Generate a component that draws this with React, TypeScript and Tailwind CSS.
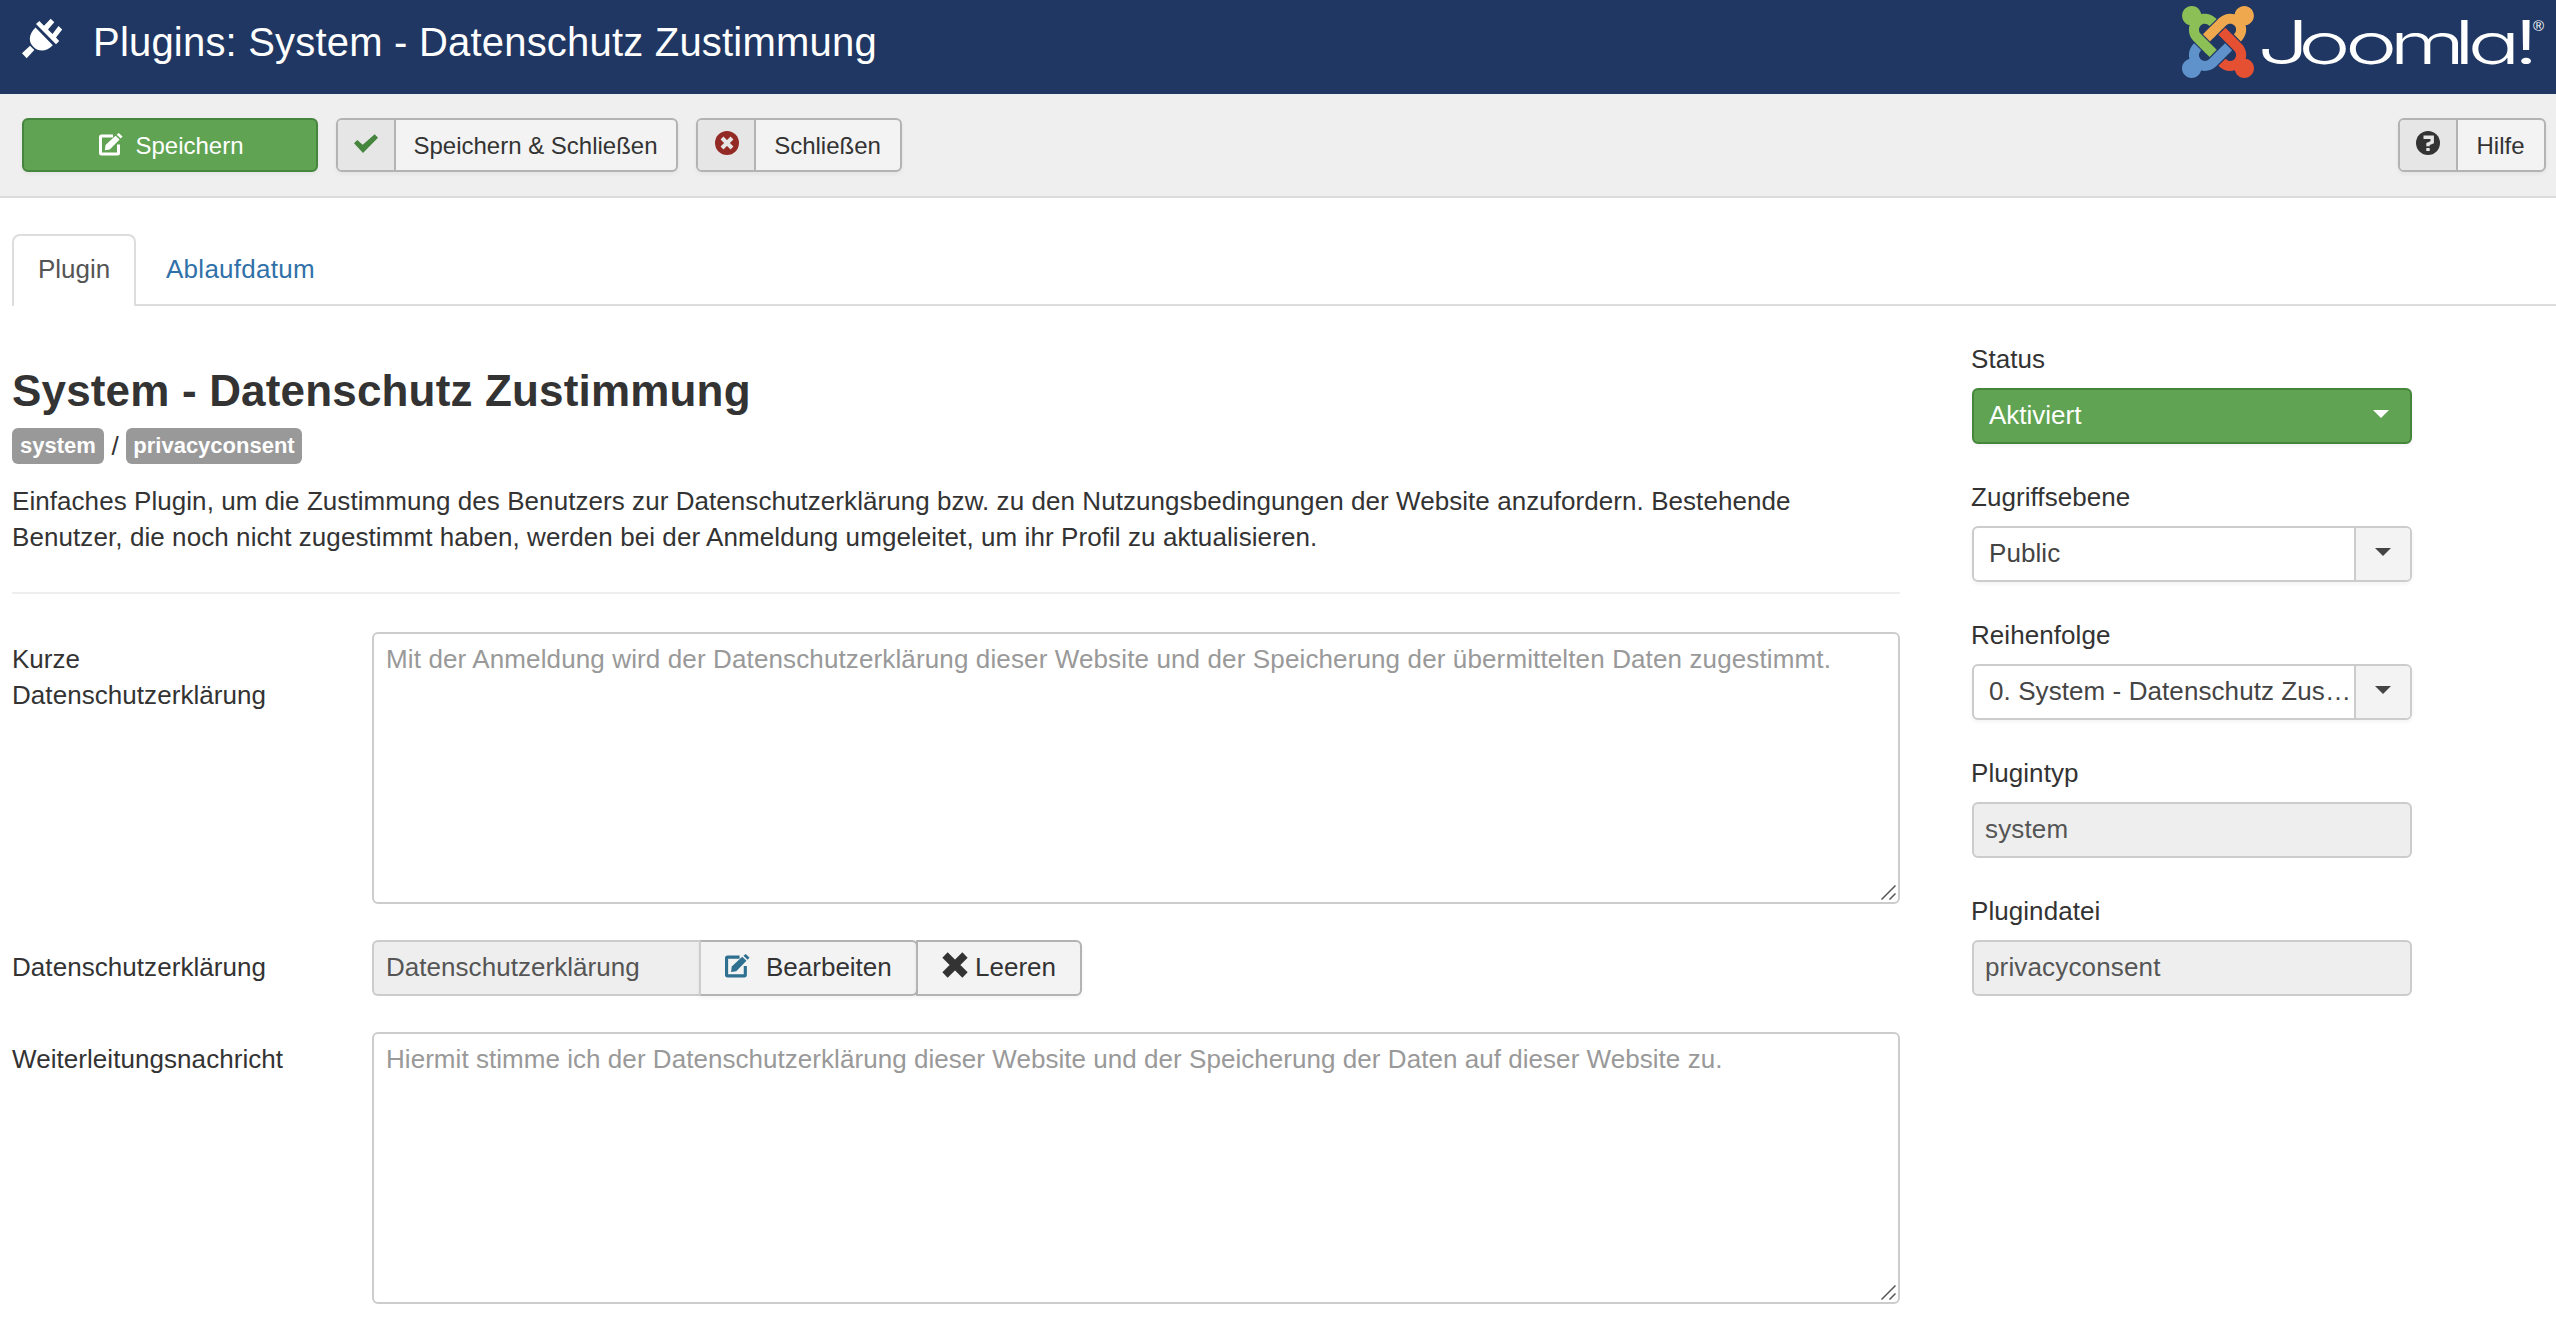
import React from "react";

const btn = "border-2 border-[#b3b3b3] bg-[#f3f3f3] text-[#333] shadow-[0_2px_4px_rgba(0,0,0,0.05)]";

function PlugIcon() {
  return (
    <svg className="h-[42px] w-[42px]" viewBox="0 0 42 42" fill="#fff">
      <path d="M13.500 9.500 L30.800 27.200 C25 33.500 17 34.200 11.800 29.200 C6.500 24.500 6 17 13.500 9.500Z" />
      <path d="M14 6 L17.300 3 L22 7.800 L28.700 0.800 L32.300 4.200 L26 11.600 L30.500 16 L36.500 8 L40.200 11.500 L34 19.500 L37.200 23 L34 26.300Z" />
      <path d="M0 35.300 L8 27.700 L12.300 32 L4.700 40.300Z" />
    </svg>
  );
}

function EditIcon({ className }: { className: string }) {
  return (
    <svg className={className} viewBox="0 0 24 24" fill="none" stroke="currentColor">
      <path d="M14 3 H2.500 Q1.500 3 1.500 4 V20 Q1.500 21 2.500 21 H18.500 Q19.500 21 19.500 20 V11.500" strokeWidth="3" />
      <path d="M5.800 17.200 L6.500 12 L16.500 2.700 L20.600 6.500 L10.800 16.500Z" fill="currentColor" stroke="none" />
      <path d="M17.700 1.700 L19.800 0 L23.500 3.400 L21.700 5.500Z" fill="currentColor" stroke="none" />
    </svg>
  );
}

function CheckIcon() {
  return (
    <svg className="h-6 w-6" viewBox="0 0 24 24" fill="#46853d">
      <path d="M0 12.300 L3.300 9 L8.700 13.700 L20.700 3.300 L24 6.700 L9 22Z" />
    </svg>
  );
}

function CancelIcon() {
  return (
    <svg className="ml-0.5 h-6 w-6" viewBox="0 0 24 24">
      <circle cx="12" cy="12" r="12" fill="#942a25" />
      <path d="M7 7 L17 17 M17 7 L7 17" stroke="#e6e6e6" strokeWidth="4" />
    </svg>
  );
}

function HelpIcon() {
  return (
    <svg className="-ml-px h-6 w-6" viewBox="0 0 24 24">
      <circle cx="12" cy="12" r="12" fill="#333" />
      <path d="M7.500 6.200 H16.200 V11.200 L12 13 V15.200" fill="none" stroke="#e6e6e6" strokeWidth="3.400" />
      <path d="M10.300 17 H13.700 V20 H10.300Z" fill="#e6e6e6" />
    </svg>
  );
}

function RemoveIcon() {
  return (
    <svg className="h-[26px] w-[26px]" viewBox="0 0 26 26">
      <path d="M3 3 L23 23 M23 3 L3 23" stroke="#333" strokeWidth="7.500" />
    </svg>
  );
}

function JoomlaLogo() {
  return (
    <svg className="h-[94px] w-[376px]" viewBox="0 0 376 94">
      <g transform="translate(2 6) scale(0.1607) translate(0 -32)">
        <path fill="#8cc056" d="M.6 92.1C.6 58.800 27.400 32 60.400 32c30 0 54.500 21.900 59.200 50.200 32.600-7.600 67.100.6 96.500 30l-44.300 44.300c-20.500-20.500-42.600-16.300-55.400-3.500-14.300 14.300-14.300 37.900 0 52.200l99.500 99.500-44 44.300c-87.700-87.200-49.700-49.700-99.800-99.700-26.800-26.500-35-64.800-24.800-98.900C20.400 144.600.6 120.700.6 92.100z" />
        <path fill="#f0a84f" d="M130.100 208.500l44.300 44.300c10-10 89.700-89.700 99.700-99.800 14.300-14.300 37.600-14.300 51.900 0 12.800 12.800 17 35-3.500 55.400l44 44.300c31.200-31.200 38.500-67.600 28.900-101.200 29.200-4.100 51.900-29.200 51.900-59.500 0-33.200-26.800-60.100-59.800-60.100-30.300 0-55.400 22.500-59.500 51.600-33.800-9.900-71.700-1.500-98.300 25.100-18.300 19.100-71.100 71.500-99.600 99.900z" />
        <path fill="#e55033" d="M396.400 360.700c8.200-32.700-.9-68.500-26.300-93.900-11.800-12.200 5 4.700-99.500-99.700l-44.300 44.300 99.700 99.700c14.300 14.300 14.300 37.600 0 51.900-12.800 12.800-35 17-55.400-3.500l-44 44.300c27.600 30.200 68 38.800 102.700 28 5.500 27.400 29.700 48.100 58.900 48.100 33 0 59.800-26.800 59.800-60.100 0-30.200-22.500-55-51.600-59.100z" />
        <path fill="#5f92cb" d="M312.100 307.600l-44-44.300c-87 86.400-50.400 50.400-99.700 99.800-14.300 14.300-37.600 14.300-51.900 0-13.100-13.400-16.900-35.300 3.200-55.400l-44-44.300c-30.200 30.200-38 65.200-29.500 98.300-26.700 6-46.200 29.900-46.200 58.200C0 453.200 26.800 480 59.800 480c28.600 0 52.500-19.800 58.600-46.700 32.700 8.200 68.500-.6 94.200-26 32.100-32 12.200-12.400 99.500-99.700z" />
      </g>
      <g fill="#fff">
        <text
          className="font-['Inter',sans-serif] [font-feature-settings:'cv11']"
          transform="translate(77 64) scale(1.55 1)"
          x="0 26.6 56.8 85.5 126.8 135.8 165.2"
          y="0"
          fontWeight="300"
          fontSize="60"
        >
          J<tspan fontSize="57">oo</tspan><tspan fontSize="56">m</tspan>l<tspan fontSize="57">a</tspan>!
        </text>
        <text className="font-['Liberation_Sans',sans-serif]" x="353" y="31" fontSize="15">®</text>
      </g>
    </svg>
  );
}

function ToolButton({ icon, label, width }: { icon: React.ReactNode; label: string; width: string }) {
  return (
    <button className={`${btn} ${width} flex h-[54px] overflow-hidden rounded-[6px]`}>
      <span className="flex h-full w-[58px] shrink-0 items-start justify-center border-r-2 border-[#b3b3b3] bg-[#e6e6e6] pt-[11px]">
        {icon}
      </span>
      <span className="flex-1 pr-px text-center text-[24px] leading-[51px]">{label}</span>
    </button>
  );
}

function Caret({ color }: { color: string }) {
  return (
    <svg className="h-2 w-4" viewBox="0 0 16 8">
      <path d="M0 0H16L8 8Z" fill={color} />
    </svg>
  );
}

function Side({ label, children }: { label: string; children: React.ReactNode }) {
  return (
    <div className="mb-[35px]">
      <div className="-ml-px mb-[11px] h-9 leading-9 tracking-[0.06px]">{label}</div>
      {children}
    </div>
  );
}

function Select({ value }: { value: string }) {
  return (
    <div className="flex h-14 overflow-hidden rounded-[6px] border-2 border-[#ccc] bg-white text-[#444] shadow-[0_2px_4px_rgba(0,0,0,0.05)]">
      <div className="flex-1 whitespace-nowrap pl-[15px] leading-[51px] tracking-[0.08px]">{value}</div>
      <div className="flex w-[56px] justify-center border-l-2 border-[#ccc] bg-[#f3f3f3] pr-px pt-5">
        <Caret color="#444" />
      </div>
    </div>
  );
}

function ReadOnly({ value }: { value: string }) {
  return (
    <div className="h-14 rounded-[6px] border-2 border-[#ccc] bg-[#eee] pl-[11px] leading-[51px] tracking-[0.15px] text-[#555]">{value}</div>
  );
}

function TextBox({ text, tracking }: { text: string; tracking: string }) {
  return (
    <div className="flex h-[272px] w-[1528px] flex-col justify-between rounded-[6px] border-2 border-[#ccc] pl-3 pt-[7px] leading-9 text-[#999]">
      <div className={`${tracking} whitespace-nowrap`}>{text}</div>
      <svg className="mb-0.5 mr-0.5 h-[15px] w-[15px] self-end" viewBox="0 0 15 15" fill="none" stroke="#555" strokeWidth="1.500">
        <path d="M0.500 14.500 L14.500 0.500 M8.500 14.500 L14.500 8.500" />
      </svg>
    </div>
  );
}

export default function App() {
  return (
    <div className="h-[1322px] w-[2556px] overflow-hidden bg-white font-['Liberation_Sans',Arial,sans-serif] text-[26px] text-[#333]">
      <header className="flex h-[94px] bg-[#1f3762] text-white">
        <div className="w-[93px] pl-[22px] pt-[18px]">
          <PlugIcon />
        </div>
        <h1 className="flex-1 whitespace-nowrap text-[40px] leading-[84px] tracking-[0.2px]">Plugins: System - Datenschutz Zustimmung</h1>
        <JoomlaLogo />
      </header>

      <div className="flex h-[104px] gap-[18px] border-b-2 border-[#dcdcdc] bg-[#efefef] pl-[22px] pr-[10px] pt-6">
        <button className="flex h-[54px] w-[296px] items-start justify-center gap-3 rounded-[6px] border-2 border-[#46853d] bg-[#60a352] pl-[3px] text-[24px] leading-[51px] text-white shadow-[0_2px_4px_rgba(0,0,0,0.05)]">
          <EditIcon className="mt-[13px] h-6 w-6" />
          Speichern
        </button>
        <ToolButton icon={<CheckIcon />} label="Speichern & Schließen" width="w-[342px]" />
        <ToolButton icon={<CancelIcon />} label="Schließen" width="w-[206px]" />
        <div className="flex-1" />
        <ToolButton icon={<HelpIcon />} label="Hilfe" width="w-[148px]" />
      </div>

      <nav className="mt-9 flex h-[72px] pl-3">
        <div className="w-[124px] rounded-t-[8px] border-2 border-b-0 border-[#ddd] pl-6 leading-[66px] text-[#555]">Plugin</div>
        <div className="flex-1 border-b-2 border-[#ddd] pl-[30px] leading-[70px] tracking-[0.27px] text-[#3071a9]">Ablaufdatum</div>
      </nav>

      <div className="flex pl-3">
        <main className="w-[1888px]">
          <h2 className="mt-[60px] whitespace-nowrap text-[44px] font-bold leading-[50px] tracking-[0.17px]">System - Datenschutz Zustimmung</h2>
          <div className="mt-3 flex h-9 items-center text-[22px] font-bold leading-9 text-white">
            <span className="h-9 w-[92px] rounded-[6px] bg-[#999] text-center">system</span>
            <span className="w-[22px] text-center text-[26px] font-normal text-[#333]">/</span>
            <span className="h-9 w-[176px] rounded-[6px] bg-[#999] text-center">privacyconsent</span>
          </div>
          <p className="mt-[19px] whitespace-nowrap leading-9">
            <span className="tracking-[0.06px]">
              Einfaches Plugin, um die Zustimmung des Benutzers zur Datenschutzerklärung bzw. zu den Nutzungsbedingungen der Website anzufordern. Bestehende
            </span>
            <br />
            <span className="tracking-[0.08px]">
              Benutzer, die noch nicht zugestimmt haben, werden bei der Anmeldung umgeleitet, um ihr Profil zu aktualisieren.
            </span>
          </p>
          <hr className="mt-[37px] border-t-2 border-[#eee]" />

          <div className="mt-[38px] flex">
            <label className="w-[360px] pt-[9px] leading-9">
              Kurze
              <br />
              <span className="tracking-[0.06px]">Datenschutzerklärung</span>
            </label>
            <TextBox
              tracking="tracking-[0.125px]"
              text="Mit der Anmeldung wird der Datenschutzerklärung dieser Website und der Speicherung der übermittelten Daten zugestimmt."
            />
          </div>

          <div className="mt-9 flex">
            <label className="w-[360px] pt-[9px] leading-9 tracking-[0.06px]">Datenschutzerklärung</label>
            <div className="h-14 w-[327px] rounded-l-[6px] border-2 border-r-0 border-[#ccc] bg-[#eee] pl-3 leading-[51px] tracking-[0.04px] text-[#555]">
              Datenschutzerklärung
            </div>
            <button className={`${btn} flex h-14 w-[219px] rounded-r-[6px] border-l-[#ccc] pl-6 leading-[51px]`}>
              <EditIcon className="mr-4 mt-[12px] h-[25px] w-[25px] text-[#2f6f8f]" />
              Bearbeiten
            </button>
            <button className={`${btn} -ml-0.5 flex h-14 w-[166px] rounded-r-[6px] pl-6 leading-[51px]`}>
              <span className="mr-[7px] mt-2.5">
                <RemoveIcon />
              </span>
              Leeren
            </button>
          </div>

          <div className="mt-9 flex">
            <label className="w-[360px] pt-[9px] leading-9 tracking-[0.06px]">Weiterleitungsnachricht</label>
            <TextBox
              tracking="tracking-[0.045px]"
              text="Hiermit stimme ich der Datenschutzerklärung dieser Website und der Speicherung der Daten auf dieser Website zu."
            />
          </div>
        </main>

        <aside className="ml-[72px] mt-[35px] w-[440px]">
          <Side label="Status">
            <div className="flex h-14 justify-between rounded-[6px] border-2 border-[#46853d] bg-[#60a352] pl-[15px] pr-[21px] leading-[51px] text-white shadow-[0_2px_4px_rgba(0,0,0,0.05)]">
              Aktiviert
              <span className="pt-5">
                <Caret color="#fff" />
              </span>
            </div>
          </Side>
          <Side label="Zugriffsebene">
            <Select value="Public" />
          </Side>
          <Side label="Reihenfolge">
            <Select value="0. System - Datenschutz Zus…" />
          </Side>
          <Side label="Plugintyp">
            <ReadOnly value="system" />
          </Side>
          <Side label="Plugindatei">
            <ReadOnly value="privacyconsent" />
          </Side>
        </aside>
      </div>
    </div>
  );
}
